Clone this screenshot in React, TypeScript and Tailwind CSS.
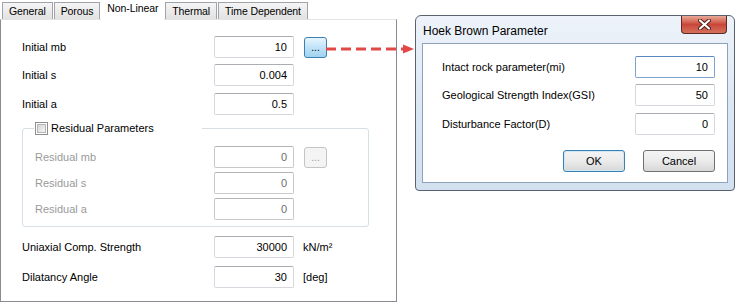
import React from "react";

const font = "font-['Liberation_Sans',Tahoma,Arial,sans-serif]";

function Field({ value, disabled = false, focused = false }: { value: string; disabled?: boolean; focused?: boolean }) {
  const border = focused
    ? "border-[#7da2ce] border-t-[#5b87c0]"
    : disabled
    ? "border-[#c9c9c9] border-t-[#b4b4b4]"
    : "border-[#d6d8de] border-t-[#abadb3]";
  return (
    <div
      className={`h-[22px] w-[80px] shrink-0 border rounded-[2px] bg-white flex items-center justify-end pr-[6px] ${border} ${
        disabled ? "text-[#6d6d6d]" : "text-black"
      }`}
    >
      {value}
    </div>
  );
}

function Row({ label, value, indent = 192, disabled = false, children }: { label: string; value: string; indent?: number; disabled?: boolean; children?: React.ReactNode }) {
  return (
    <div className="flex items-center h-[22px]">
      <div className={`shrink-0 ${disabled ? "text-[#9a9a9a]" : "text-black"}`} style={{ width: indent }}>
        {label}
      </div>
      <Field value={value} disabled={disabled} />
      {children}
    </div>
  );
}

function Tab({ label, active = false }: { label: string; active?: boolean }) {
  if (active) {
    return (
      <div className="h-[19px] px-[6px] flex items-start pt-[2px] bg-white relative z-10 -mb-[1px] mr-[1px]">
        {label}
      </div>
    );
  }
  return (
    <div className="h-[17px] px-[6px] flex items-center border border-b-0 border-[#a0a3aa] bg-gradient-to-b from-[#f5f5f5] to-[#e2e2e2] mr-[1px]">
      {label}
    </div>
  );
}

function DotsButton({ disabled = false }: { disabled?: boolean }) {
  return (
    <div
      className={`ml-[10px] h-[21px] w-[23px] rounded-[3px] border flex items-end justify-center pb-[4px] text-[10px] leading-none ${
        disabled
          ? "border-[#c4c4c4] bg-[#f4f4f4] text-[#9a9a9a]"
          : "border-[#3c7fb1] bg-gradient-to-b from-[#e8f5fd] via-[#bfe3f8] to-[#9fd3f2] text-black"
      }`}
    >
      ...
    </div>
  );
}

function Checkbox() {
  return (
    <div className="h-[13px] w-[13px] border border-[#8e8f8f] bg-white p-[1px]">
      <div className="h-full w-full border border-[#b5b5b5] bg-gradient-to-br from-[#d6d6d6] to-[#f4f4f4]" />
    </div>
  );
}

function WinButton({ label, width, isDefault = false }: { label: string; width: number; isDefault?: boolean }) {
  return (
    <div
      className={`h-[22px] rounded-[3px] border flex items-center justify-center bg-gradient-to-b from-[#f4f4f4] via-[#ebebeb] to-[#d7d7d7] ${
        isDefault ? "border-[#3c7fb1] shadow-[inset_0_0_0_1px_#cde8f7]" : "border-[#707070]"
      }`}
      style={{ width }}
    >
      {label}
    </div>
  );
}

export default function App() {
  return (
    <div className={`relative w-[753px] h-[303px] bg-white flex items-start text-[11px] leading-none ${font}`}>
      {/* property sheet */}
      <div className="w-[397px] flex flex-col">
        <div className="h-[19px] flex items-end pl-[2px] text-[10.5px] tracking-[-0.1px]">
          <Tab label="General" />
          <Tab label="Porous" />
          <Tab label="Non-Linear" active />
          <Tab label="Thermal" />
          <Tab label="Time Dependent" />
        </div>
        <div className="h-[283px] border border-[#898c95] border-t-[#e4e4e4] pl-[21px] flex flex-col">
          <div className="mt-[16px]">
            <Row label="Initial mb" value="10">
              <DotsButton />
            </Row>
          </div>
          <div className="mt-[6px]">
            <Row label="Initial s" value="0.004" />
          </div>
          <div className="mt-[7px]">
            <Row label="Initial a" value="0.5" />
          </div>

          {/* residual group */}
          <div className="relative mt-[13px] w-[347px] h-[99px] border border-[#d5dfe5] rounded-[3px] pl-[12px] pt-[17px] flex flex-col gap-[4px]">
            <div className="absolute -top-[7px] left-[11px] w-[168px] h-[13px] bg-white flex items-center gap-[3px] pl-[1px]">
              <Checkbox />
              <span className="text-black">Residual Parameters</span>
            </div>
            <Row label="Residual mb" value="0" indent={179} disabled>
              <DotsButton disabled />
            </Row>
            <Row label="Residual s" value="0" indent={179} disabled />
            <Row label="Residual a" value="0" indent={179} disabled />
          </div>

          <div className="mt-[9px]">
            <Row label="Uniaxial Comp. Strength" value="30000">
              <span className="ml-[9px]">kN/m²</span>
            </Row>
          </div>
          <div className="mt-[8px]">
            <Row label="Dilatancy Angle" value="30">
              <span className="ml-[9px]">[deg]</span>
            </Row>
          </div>
        </div>
      </div>

      {/* dialog */}
      <div className="ml-[18px] mt-[15px] w-[320px] h-[176px] border border-[#5a6270] rounded-t-[6px] rounded-b-[4px] bg-gradient-to-b from-[#eef3fa] via-[#dce7f4] to-[#d3e0f0] flex flex-col px-[6px] pb-[7px]">
        <div className="h-[27px] flex items-center justify-between">
          <span className="text-[12px] pl-[1px] pt-[2px] text-black">Hoek Brown Parameter</span>
          <div className="self-start mr-[1px] w-[46px] h-[18px] rounded-b-[4px] border border-t-0 border-[#5b2a22] bg-gradient-to-b from-[#e9a897] via-[#c8473a] to-[#d5705d] flex items-center justify-center">
            <svg width="13" height="11" viewBox="0 0 13 11">
              <path d="M2 1.5 L11 9.5 M11 1.5 L2 9.5" stroke="#4a1d16" strokeWidth="4" strokeLinecap="round" />
              <path d="M2 1.5 L11 9.5 M11 1.5 L2 9.5" stroke="#ffffff" strokeWidth="2.2" strokeLinecap="round" />
            </svg>
          </div>
        </div>
        <div className="flex-1 border border-[#8ea2bc] bg-white pl-[19px] pr-[12px] pt-[12px] flex flex-col">
          <div className="flex items-center justify-between h-[22px]">
            <span>Intact rock parameter(mi)</span>
            <Field value="10" focused />
          </div>
          <div className="flex items-center justify-between h-[22px] mt-[6px]">
            <span>Geological Strength Index(GSI)</span>
            <Field value="50" />
          </div>
          <div className="flex items-center justify-between h-[22px] mt-[7px]">
            <span>Disturbance Factor(D)</span>
            <Field value="0" />
          </div>
          <div className="flex justify-end gap-[18px] mt-[15px]">
            <WinButton label="OK" width={62} isDefault />
            <WinButton label="Cancel" width={72} />
          </div>
        </div>
      </div>

      {/* red dashed pointer */}
      <svg className="absolute left-[326px] top-[43px]" width="90" height="12" viewBox="0 0 90 12">
        <line x1="0" y1="6" x2="78" y2="6" stroke="#e24848" strokeWidth="3" strokeDasharray="10 5" />
        <polygon points="77,1.5 88,6 77,10.5" fill="#e24848" />
      </svg>
    </div>
  );
}
